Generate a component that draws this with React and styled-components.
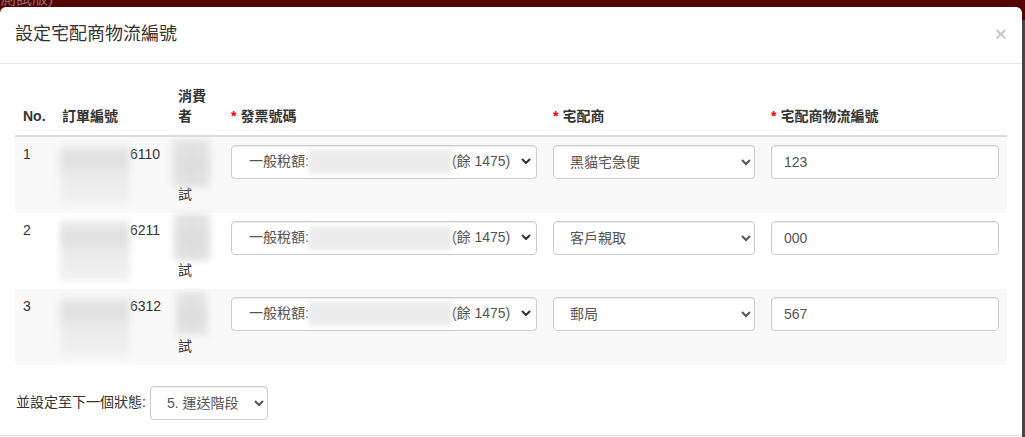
import React from 'react';
import styled, { createGlobalStyle } from 'styled-components';

const GlobalStyle = createGlobalStyle`
  html, body {
    margin: 0;
    padding: 0;
  }
  body {
    font-family: 'Liberation Sans', 'Noto Sans CJK TC', sans-serif;
    font-size: 14px;
    line-height: 1.42857;
    color: #333;
    background: linear-gradient(#5a0000 0, #5a0000 20px, #585858 20px);
    min-height: 100vh;
    overflow: hidden;
  }
`;

const TopBar = styled.div`
  height: 7px;
  overflow: hidden;
`;

const TopText = styled.div`
  margin-top: -9px;
  font-size: 16px;
  line-height: 16px;
  color: #8c6d6d;
  white-space: nowrap;
`;

const Modal = styled.div`
  width: 1022px;
  background: #fff;
  border-radius: 6px 6px 0 0;
  box-shadow: 0 5px 15px rgba(0, 0, 0, 0.5);
`;

const Header = styled.div`
  display: flex;
  align-items: center;
  justify-content: space-between;
  padding: 15px;
  border-bottom: 1px solid #e5e5e5;
`;

const Title = styled.h4`
  margin: 0;
  font-size: 18px;
  font-weight: 400;
  line-height: 1.42857;
  color: #333;
`;

const Close = styled.button`
  border: 0;
  background: transparent;
  padding: 0;
  font-family: 'Liberation Sans', sans-serif;
  font-size: 21px;
  font-weight: 700;
  line-height: 1;
  color: #000;
  opacity: 0.2;
  margin-top: -2px;
  cursor: pointer;
`;

const Body = styled.div`
  padding: 15px;
`;

const Table = styled.table`
  width: 100%;
  border-collapse: collapse;
  border-spacing: 0;
  margin-bottom: 21px;
  table-layout: fixed;
`;

const Th = styled.th`
  padding: 8px;
  text-align: left;
  vertical-align: bottom;
  font-weight: 700;
  border-bottom: 2px solid #ddd;
`;

const Star = styled.span`
  color: #e00;
  margin-right: 4px;
`;

const Row = styled.tr`
  background: ${(p) => (p.$striped ? '#f9f9f9' : '#fff')};
  & + & td {
    border-top: 1px solid #ddd;
  }
`;

const Td = styled.td`
  padding: 8px;
  vertical-align: top;
`;

const OrderNo = styled.div`
  display: flex;
  align-items: flex-start;
  margin-left: -2px;
`;

const Blur = styled.span`
  display: inline-block;
  flex: none;
  width: ${(p) => p.$w}px;
  height: ${(p) => p.$h}px;
  background: ${(p) => p.$bg};
  filter: blur(${(p) => p.$r}px);
`;

const Consumer = styled.div`
  display: flex;
  flex-direction: column;
  align-items: flex-start;
`;

const ConsumerBlur = styled(Blur)`
  margin-left: ${(p) => p.$dx}px;
  margin-top: ${(p) => p.$dy}px;
  margin-bottom: ${(p) => 40 - p.$h - p.$dy}px;
`;

const Select = styled.select`
  display: block;
  width: ${(p) => p.$w || '100%'};
  height: 34px;
  padding: 6px 12px;
  font-family: 'Liberation Sans', 'Noto Sans CJK TC', sans-serif;
  font-size: 14px;
  color: #555;
  background: #fff;
  border: 1px solid #ccc;
  border-radius: 4px;
  box-shadow: inset 0 1px 1px rgba(0, 0, 0, 0.075);
  box-sizing: border-box;
`;

const FakeSelect = styled.div`
  display: flex;
  align-items: center;
  height: 34px;
  padding: 0 5px 0 17px;
  font-size: 14px;
  color: #555;
  background: #fff;
  border: 1px solid #ccc;
  border-radius: 4px;
  box-shadow: inset 0 1px 1px rgba(0, 0, 0, 0.075);
  box-sizing: border-box;
  white-space: nowrap;
`;

const Chevron = styled.svg`
  margin-left: auto;
  flex: none;
`;

const Input = styled.input`
  display: block;
  width: 100%;
  height: 34px;
  padding: 6px 12px;
  font-family: 'Liberation Sans', 'Noto Sans CJK TC', sans-serif;
  font-size: 14px;
  color: #555;
  background: #fff;
  border: 1px solid #ccc;
  border-radius: 4px;
  box-shadow: inset 0 1px 1px rgba(0, 0, 0, 0.075);
  box-sizing: border-box;
  outline: none;
`;

const StatusRow = styled.div`
  display: flex;
  align-items: center;
  gap: 4px;
  padding-left: 1px;
`;

const Footer = styled.div`
  border-top: 1px solid #e5e5e5;
  height: 20px;
`;

const orderBlur =
  'linear-gradient(#ececec, #e0e0e0 25%, #ededed 60%, #f2f2f2)';
const consumerBlur =
  'radial-gradient(ellipse at 50% 55%, #dcdcdc 0%, #e2e2e2 55%, #ececec 100%)';
const invoiceBlur = '#ececec';

const rows = [
  { no: 1, order: '6110', carrier: '黑貓宅急便', track: '123', cw: 39, ch: 48, dx: -6, dy: -6 },
  { no: 2, order: '6211', carrier: '客戶親取', track: '000', cw: 38, ch: 48, dx: -5, dy: -8 },
  { no: 3, order: '6312', carrier: '郵局', track: '567', cw: 33, ch: 43, dx: -3, dy: -5 },
];

const carriers = ['黑貓宅急便', '客戶親取', '郵局'];

function ChevronIcon() {
  return (
    <Chevron width="10" height="7" viewBox="0 0 10 7">
      <path d="M1.5 1.5L5 5L8.5 1.5" stroke="#333" strokeWidth="2" fill="none" strokeLinecap="round" strokeLinejoin="round" />
    </Chevron>
  );
}

export default function App() {
  return (
    <>
      <GlobalStyle />
      <TopBar>
        <TopText>測試版)</TopText>
      </TopBar>
      <Modal>
        <Header>
          <Title>設定宅配商物流編號</Title>
          <Close aria-label="Close">×</Close>
        </Header>
        <Body>
          <Table>
            <colgroup>
              <col style={{ width: 39 }} />
              <col style={{ width: 116 }} />
              <col style={{ width: 53 }} />
              <col style={{ width: 322 }} />
              <col style={{ width: 218 }} />
              <col style={{ width: 244 }} />
            </colgroup>
            <thead>
              <tr>
                <Th>No.</Th>
                <Th>訂單編號</Th>
                <Th>消費者</Th>
                <Th><Star>*</Star>發票號碼</Th>
                <Th><Star>*</Star>宅配商</Th>
                <Th><Star>*</Star>宅配商物流編號</Th>
              </tr>
            </thead>
            <tbody>
              {rows.map((r, i) => (
                <Row key={r.no} $striped={i % 2 === 0}>
                  <Td>{r.no}</Td>
                  <Td>
                    <OrderNo>
                      <Blur $w={70} $h={60} $bg={orderBlur} $r={3} />
                      <span>{r.order}</span>
                    </OrderNo>
                  </Td>
                  <Td>
                    <Consumer>
                      <ConsumerBlur $w={r.cw} $h={r.ch} $dx={r.dx} $dy={r.dy} $bg={consumerBlur} $r={3} />
                      <span>試</span>
                    </Consumer>
                  </Td>
                  <Td>
                    <FakeSelect>
                      <span>一般稅額:</span>
                      <Blur $w={143} $h={24} $bg={invoiceBlur} $r={2} />
                      <span>(餘 1475)</span>
                      <ChevronIcon />
                    </FakeSelect>
                  </Td>
                  <Td>
                    <Select defaultValue={r.carrier}>
                      {carriers.map((c) => (
                        <option key={c} value={c}>{c}</option>
                      ))}
                    </Select>
                  </Td>
                  <Td>
                    <Input defaultValue={r.track} />
                  </Td>
                </Row>
              ))}
            </tbody>
          </Table>
          <StatusRow>
            <span>並設定至下一個狀態:</span>
            <Select $w="118px" defaultValue="5">
              <option value="5">5. 運送階段</option>
            </Select>
          </StatusRow>
        </Body>
        <Footer />
      </Modal>
    </>
  );
}
